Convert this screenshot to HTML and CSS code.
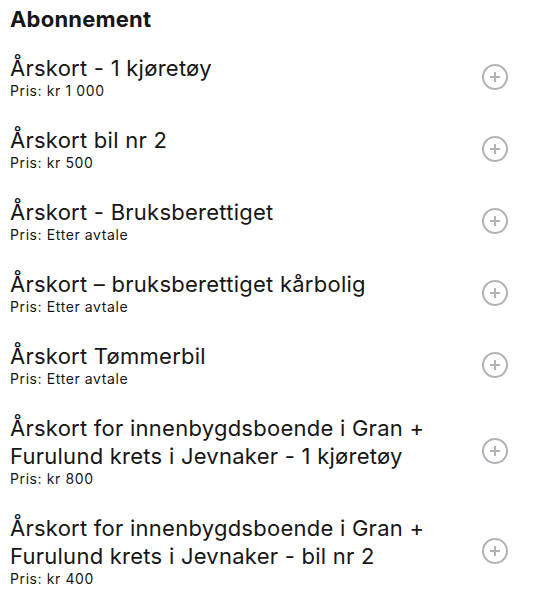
FILE: index.html
```html
<!DOCTYPE html>
<html lang="no">
<head>
  <meta charset="UTF-8">
  <meta name="viewport" content="width=device-width, initial-scale=1.0">
  <title>Abonnement</title>
  <link rel="stylesheet" href="styles.css">
</head>
<body>
  <section class="subscriptions">
    <h2 class="title">Abonnement</h2>
    <ul class="list">
      <li class="item">
        <div class="info">
          <div class="name">Årskort - 1 kjøretøy</div>
          <div class="price">Pris: kr 1 000</div>
        </div>
        <button class="add" aria-label="Legg til"><svg viewBox="0 0 26 26"><circle cx="13" cy="13" r="12"/><path d="M13 8v10M8 13h10"/></svg></button>
      </li>
      <li class="item">
        <div class="info">
          <div class="name">Årskort bil nr 2</div>
          <div class="price">Pris: kr 500</div>
        </div>
        <button class="add" aria-label="Legg til"><svg viewBox="0 0 26 26"><circle cx="13" cy="13" r="12"/><path d="M13 8v10M8 13h10"/></svg></button>
      </li>
      <li class="item">
        <div class="info">
          <div class="name">Årskort - Bruksberettiget</div>
          <div class="price">Pris: Etter avtale</div>
        </div>
        <button class="add" aria-label="Legg til"><svg viewBox="0 0 26 26"><circle cx="13" cy="13" r="12"/><path d="M13 8v10M8 13h10"/></svg></button>
      </li>
      <li class="item">
        <div class="info">
          <div class="name">Årskort – bruksberettiget kårbolig</div>
          <div class="price">Pris: Etter avtale</div>
        </div>
        <button class="add" aria-label="Legg til"><svg viewBox="0 0 26 26"><circle cx="13" cy="13" r="12"/><path d="M13 8v10M8 13h10"/></svg></button>
      </li>
      <li class="item">
        <div class="info">
          <div class="name">Årskort Tømmerbil</div>
          <div class="price">Pris: Etter avtale</div>
        </div>
        <button class="add" aria-label="Legg til"><svg viewBox="0 0 26 26"><circle cx="13" cy="13" r="12"/><path d="M13 8v10M8 13h10"/></svg></button>
      </li>
      <li class="item">
        <div class="info">
          <div class="name">Årskort for innenbygdsboende i Gran + Furulund krets i Jevnaker - 1 kjøretøy</div>
          <div class="price">Pris: kr 800</div>
        </div>
        <button class="add" aria-label="Legg til"><svg viewBox="0 0 26 26"><circle cx="13" cy="13" r="12"/><path d="M13 8v10M8 13h10"/></svg></button>
      </li>
      <li class="item">
        <div class="info">
          <div class="name">Årskort for innenbygdsboende i Gran + Furulund krets i Jevnaker - bil nr 2</div>
          <div class="price">Pris: kr 400</div>
        </div>
        <button class="add" aria-label="Legg til"><svg viewBox="0 0 26 26"><circle cx="13" cy="13" r="12"/><path d="M13 8v10M8 13h10"/></svg></button>
      </li>
    </ul>
  </section>
</body>
</html>
```

FILE: styles.css
```css
body {
  margin: 0;
  background: #fff;
  color: #161616;
  font-family: Inter, 'Open Sans', sans-serif;
}

.subscriptions {
  padding: 5px 26px 0 10px;
}

.title {
  margin: 0 0 21px;
  font-size: 22px;
  font-weight: 700;
  line-height: 28px;
  letter-spacing: 0.2px;
}

.list {
  list-style: none;
  margin: 0;
  padding: 0;
  display: flex;
  flex-direction: column;
  gap: 26px;
}

.item {
  display: flex;
  align-items: center;
  justify-content: space-between;
  gap: 40px;
}

.name {
  font-size: 22px;
  line-height: 28px;
  letter-spacing: 0.25px;
}

.price {
  font-size: 14px;
  line-height: 18px;
  letter-spacing: 0.6px;
}

.add {
  flex: none;
  width: 26px;
  height: 26px;
  padding: 0;
  border: none;
  background: none;
  cursor: pointer;
}

.add svg {
  display: block;
  width: 26px;
  height: 26px;
  fill: none;
  stroke: #afb3b8;
  stroke-width: 2;
}
```
